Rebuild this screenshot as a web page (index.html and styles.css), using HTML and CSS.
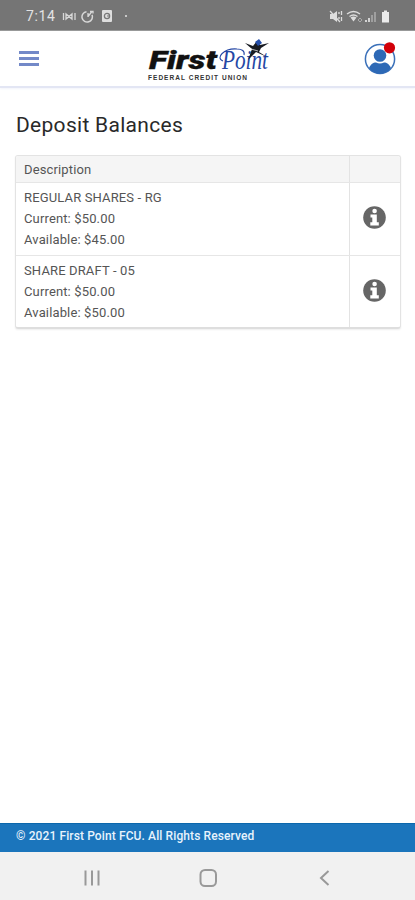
FILE: index.html
```html
<!DOCTYPE html>
<html lang="en">
<head>
<meta charset="utf-8">
<title>Deposit Balances</title>
<link rel="stylesheet" href="styles.css">
</head>
<body>
<div class="status">
  <span class="clock">7:14</span>
  <svg class="left-icons" width="70" height="14" viewBox="0 0 70 14" fill="none" stroke="#d8d8d8">
    <path d="M1.5 4v7M13 4v7M4 5v5l6-5v5zM4 5v5M10 5v5" stroke-width="1.3"/>
    <path d="M24.5 2.700a5.200 5.200 0 1 0 5.500 3.200" stroke-width="1.5"/>
    <path d="M26 7.500l4-5M26 4v4M28 2.500h3v2" stroke-width="1.3"/>
    <rect x="40" y="1" width="10" height="12" rx="1" fill="#dedede" stroke="none"/>
    <circle cx="45" cy="7" r="2.600" stroke="#777" stroke-width="1.3"/>
    <path d="M45 7h3" stroke="#777"/>
    <circle cx="64" cy="7" r="1" fill="#e5e5e5" stroke="none"/>
  </svg>
  <svg class="right-icons" width="64" height="14" viewBox="0 0 64 14" fill="none" stroke="#dedede">
    <path d="M1 5h3l4-3v11L4 10H1z" fill="#dedede" stroke="none"/>
    <path d="M1 2l10 11" stroke="#dedede" stroke-width="1.2"/>
    <path d="M10 3v2M12.500 2v4M10 8v2M12.500 8v4" stroke-width="1.3"/>
    <path d="M18 5q6.500-5 13 0M20.500 7.500q4-3 8 0" stroke-width="1.4"/>
    <path d="M21.500 8.500q3-2 6 0l-3 4z" fill="#dedede" stroke="none"/>
    <path d="M29 11l2-2 2 2-2 2z" stroke="#aaa"/>
    <path d="M37 11v2M40 9v4" stroke-width="1.800"/>
    <path d="M43 6v7M46 3v10" stroke="#aaa" stroke-width="1.600"/>
    <path d="M53 3h2V1.500h3V3h2v10.500h-7z" fill="#ececec" stroke="none"/>
  </svg>
</div>
<header class="header">
  <div class="menu"><i></i><i></i><i></i></div>
  <svg class="logo" width="146" height="50" viewBox="0 0 146 50">
    <text class="first" transform="translate(17 35) scale(1.13 1)" x="0" y="0" textLength="60" lengthAdjust="spacingAndGlyphs">First</text>
    <text class="point" x="90" y="35" textLength="46" lengthAdjust="spacingAndGlyphs">Point</text>
    <path d="M91 27C83 24 92 14 105 15c5 0 8 2 7 6" fill="none" stroke="#2547a5" stroke-width="1.100"/>
    <path d="M113 9l8 3 4-5 3 4 9-2-8 5-2 4 8 5-11-5-8 8 4-11z" fill="#181b22"/>
    <path d="M123 8l4-3 3 4-4 3z" fill="#244eaa"/>
    <path d="M119 15l7 2" stroke="#fff" stroke-width=".7"/>
    <text class="union" x="16" y="45.500" textLength="99" lengthAdjust="spacing">FEDERAL CREDIT UNION</text>
  </svg>
  <svg class="user" width="34" height="34" viewBox="0 0 34 34">
    <circle cx="17" cy="17" r="14.600" fill="#fff" stroke="#3a70b9" stroke-width="1.500"/>
    <circle cx="17" cy="13.500" r="6.300" fill="#2d69b6"/>
    <path d="M6 26c2-4 4-5.500 7-5.500q4 2 8 0c3 0 5 1.500 7 5.500-5 7.500-17 7.500-22 0z" fill="#2d69b6"/>
    <circle cx="26.500" cy="5.800" r="5.600" fill="#d20009"/>
  </svg>
</header>
<main class="main">
  <h1>Deposit Balances</h1>
  <div class="table">
    <div class="row head"><div class="cell"><span>Description</span></div><div class="info"></div></div>
    <div class="row">
      <div class="cell"><span>REGULAR SHARES - RG</span><span>Current: $50.00</span><span>Available: $45.00</span></div>
      <div class="info"><svg width="23" height="23" viewBox="0 0 23 23"><circle cx="11.500" cy="11.500" r="11.300" fill="#666"/><circle cx="11.600" cy="5" r="2.300" fill="#fff"/><path d="M7.500 8.500h6.300v7.700h2v3.200H7.300v-3.200h2v-4.700H7.500z" fill="#fff"/></svg></div>
    </div>
    <div class="row">
      <div class="cell"><span>SHARE DRAFT - 05</span><span>Current: $50.00</span><span>Available: $50.00</span></div>
      <div class="info"><svg width="23" height="23" viewBox="0 0 23 23"><circle cx="11.500" cy="11.500" r="11.300" fill="#666"/><circle cx="11.600" cy="5" r="2.300" fill="#fff"/><path d="M7.500 8.500h6.300v7.700h2v3.200H7.300v-3.200h2v-4.700H7.500z" fill="#fff"/></svg></div>
    </div>
  </div>
</main>
<footer class="footer"><span>© 2021 First Point FCU. All Rights Reserved</span></footer>
<nav class="nav">
  <svg width="415" height="48" viewBox="0 0 415 48" fill="none" stroke="#999">
    <path d="M85.500 18.500v15M92 18.500v15M98.500 18.500v15" stroke-width="2"/>
    <rect x="200.500" y="18" width="15.500" height="16" rx="4.500" stroke-width="2"/>
    <path d="M328.500 19l-7.500 7 7.500 7" stroke-width="2"/>
  </svg>
</nav>
</body>
</html>
```
FILE: styles.css
```css
* { box-sizing: border-box; }
body { margin: 0; height: 900px; display: flex; flex-direction: column; background: #fff; font-family: Roboto, sans-serif; color: #555; overflow: hidden; }
svg { display: block; flex: none; }
.status { height: 31px; flex: none; background: #757575; border-bottom: 1px solid #929292; display: flex; align-items: center; padding: 1px 22px 0 26px; }
.clock { width: 36px; font-size: 14px; color: #e3e3e3; letter-spacing: .6px; }
.right-icons { margin-left: auto; }
.header { height: 57px; flex: none; border-bottom: 2px solid #e3e6f4; box-shadow: 0 1px 2px #f2f4fb; display: flex; align-items: center; justify-content: space-between; padding: 0 18px 0 19px; }
.menu { width: 20px; display: flex; flex-direction: column; gap: 3.5px; }
.menu i { height: 2.500px; background: #7389c8; }
.logo { margin-left: 7px; overflow: visible; }
.first { font: italic 900 25px Roboto, sans-serif; fill: #111; stroke: #111; stroke-width: .3px; }
.point { font: italic 27px "Liberation Serif", serif; fill: #2547a5; }
.union { font: bold 6.500px "Liberation Sans", sans-serif; fill: #333; }
.main { flex: 1; padding: 24px 14px 0 15px; }
h1 { margin: 0; height: 43px; font-size: 21px; line-height: 26px; font-weight: 400; color: #292929; padding-left: 1px; letter-spacing: .3px; }
.table { height: 174px; border: 1px solid #e3e3e3; border-bottom: 2px solid #dedede; border-radius: 3px; box-shadow: 0 1px 2px #eee; overflow: hidden; }
.row { display: flex; height: 73px; border-top: 1px solid #e6e6e6; }
.row.head { height: 26px; background: #f5f5f5; border-top: 0; }
.cell { flex: 1; padding: 4px 0 0 8px; display: flex; flex-direction: column; align-items: flex-start; }
.head .cell { padding-top: 3px; }
.cell span { font-size: 13px; line-height: 21px; white-space: nowrap; letter-spacing: .14px; }
.info { width: 51px; border-left: 1px solid #e3e3e3; display: flex; align-items: center; justify-content: center; padding: 0 1px 3px 0; }
.footer { height: 29px; flex: none; background: #1b75bc; border-top: 1px solid #0b67ac; padding: 4px 16px; font-size: 12px; line-height: 17px; font-weight: 500; color: #e8f3fc; letter-spacing: .11px; }
.nav { height: 48px; flex: none; background: #f1f1f1; }
```
